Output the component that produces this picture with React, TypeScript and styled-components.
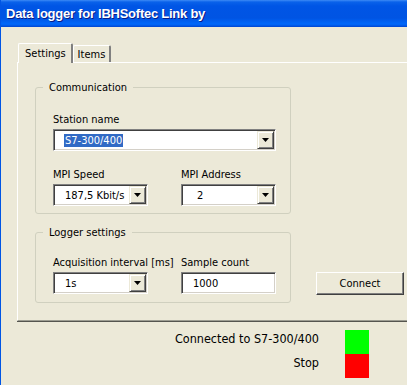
import React from "react";
import styled, { createGlobalStyle } from "styled-components";

const GlobalStyle = createGlobalStyle`
  html, body {
    margin: 0;
    padding: 0;
    background: #ece9d8;
  }
`;

const Window = styled.div`
  width: 407px;
  height: 385px;
  box-sizing: border-box;
  background: #ece9d8;
  border-left: 1px solid #0055e5;
  display: flex;
  flex-direction: column;
  overflow: hidden;
  font-family: "DejaVu Sans Condensed", "DejaVu Sans", sans-serif;
  font-size: 11px;
  color: #000;
`;

const TitleBar = styled.div`
  height: 27px;
  flex: none;
  display: flex;
  align-items: center;
  padding-left: 5px;
  background: linear-gradient(
    to bottom,
    #3d8bf5 0px,
    #0a62ea 2px,
    #0055e5 6px,
    #0054e3 18px,
    #0068fa 24px,
    #0060f0 25px,
    #0045d0 27px
  );
  color: #fff;
  font-family: "Liberation Sans", Arial, sans-serif;
  font-weight: bold;
  font-size: 13px;
  letter-spacing: -0.25px;
  text-shadow: 1px 1px 0 #0a1c86;
`;

const Body = styled.div`
  padding: 16px 0 0 16px;
`;

const TabStrip = styled.div`
  display: flex;
  align-items: flex-end;
  height: 19px;
  padding-left: 1px;
`;

const Tab = styled.div<{ $active?: boolean }>`
  box-sizing: border-box;
  height: ${(p) => (p.$active ? "20px" : "17px")};
  margin-bottom: ${(p) => (p.$active ? "-1px" : "0")};
  padding: ${(p) => (p.$active ? "3px 5px 0 6px" : "2px 4px 0 4px")};
  background: #ece9d8;
  border-top: 1px solid #fff;
  border-left: 1px solid #fff;
  border-right: 2px solid #808080;
  border-radius: 2px 2px 0 0;
  position: relative;
  z-index: ${(p) => (p.$active ? 1 : 0)};
`;

const Panel = styled.div`
  border-top: 1px solid #fff;
  border-left: 1px solid #fff;
  border-bottom: 1px solid #9d9d92;
  box-shadow: 0 1px 0 #55554f;
  padding: 18px 0 17px 17px;
  display: flex;
  align-items: flex-end;
  gap: 25px;
`;

const Groups = styled.div`
  width: 256px;
  display: flex;
  flex-direction: column;
  gap: 12px;
`;

const Group = styled.fieldset<{ $top: number; $bottom: number }>`
  margin: 0;
  padding: ${(p) => `${p.$top}px 13px ${p.$bottom}px 17px`};
  border: 1px solid #d0d0bf;
  border-radius: 3px;
  display: grid;
  grid-template-columns: 95px 95px;
  column-gap: 33px;
  row-gap: 17px;
`;

const Legend = styled.legend`
  margin-left: -10px;
  padding: 0 6px;
  line-height: 13px;
`;

const Field = styled.div<{ $wide?: boolean }>`
  display: flex;
  flex-direction: column;
  gap: 3px;
  grid-column: ${(p) => (p.$wide ? "1 / span 2" : "auto")};
`;

const Label = styled.span`
  line-height: 13px;
  white-space: nowrap;
`;

const Sunken = styled.div`
  box-sizing: border-box;
  height: 22px;
  display: flex;
  align-items: stretch;
  background: #fff;
  border-top: 1px solid #808080;
  border-left: 1px solid #808080;
  border-bottom: 1px solid #fff;
  border-right: 1px solid #fff;
  box-shadow: inset 1px 1px 0 #404040, inset -1px -1px 0 #d4d0c8;
`;

const Value = styled.div<{ $indent?: number }>`
  flex: 1;
  min-width: 0;
  display: flex;
  align-items: center;
  padding-left: ${(p) => p.$indent ?? 11}px;
  white-space: nowrap;
  overflow: hidden;
`;

const Selected = styled.span`
  background: #316ac5;
  color: #fff;
  padding: 0 1px;
  margin-left: -1px;
  line-height: 13px;
`;

const ArrowButton = styled.div`
  box-sizing: border-box;
  flex: none;
  width: 17px;
  margin: 1px 1px 1px 0;
  display: flex;
  align-items: center;
  justify-content: center;
  background: #ece9d8;
  border-top: 1px solid #ece9d8;
  border-left: 1px solid #ece9d8;
  border-right: 1px solid #404040;
  border-bottom: 1px solid #404040;
  box-shadow: inset 1px 1px 0 #fff, inset -1px -1px 0 #808080;
`;

const Arrow = () => (
  <svg width="7" height="4" viewBox="0 0 7 4">
    <path d="M0 0h7L3.5 4z" fill="#000" />
  </svg>
);

const Combo: React.FC<{ children: React.ReactNode; indent?: number }> = ({
  children,
  indent,
}) => (
  <Sunken>
    <Value $indent={indent}>{children}</Value>
    <ArrowButton>
      <Arrow />
    </ArrowButton>
  </Sunken>
);

const Button = styled.button`
  box-sizing: border-box;
  width: 88px;
  height: 23px;
  margin-bottom: 8px;
  padding: 0;
  font: inherit;
  color: #000;
  background: #ece9d8;
  border-top: 1px solid #fff;
  border-left: 1px solid #fff;
  border-right: 1px solid #404040;
  border-bottom: 1px solid #404040;
  box-shadow: inset -1px -1px 0 #808080;
`;

const Status = styled.div`
  padding: 9px 38px 0 0;
  display: flex;
  flex-direction: column;
  font-size: 12.5px;
`;

const StatusRow = styled.div`
  display: flex;
  justify-content: flex-end;
  align-items: flex-start;
  gap: 26px;
`;

const StatusText = styled.span`
  line-height: 15px;
  padding-top: 1px;
`;

const Lamp = styled.div<{ $color: string }>`
  width: 24px;
  height: 24px;
  background: ${(p) => p.$color};
`;

export default function App() {
  return (
    <>
      <GlobalStyle />
      <Window>
        <TitleBar>Data logger for IBHSoftec Link by</TitleBar>
        <Body>
          <TabStrip>
            <Tab $active>Settings</Tab>
            <Tab>Items</Tab>
          </TabStrip>
          <Panel>
            <Groups>
              <Group $top={19} $bottom={7}>
                <Legend>Communication</Legend>
                <Field $wide>
                  <Label>Station name</Label>
                  <Combo>
                    <Selected>S7-300/400</Selected>
                  </Combo>
                </Field>
                <Field>
                  <Label>MPI Speed</Label>
                  <Combo>187,5 Kbit/s</Combo>
                </Field>
                <Field>
                  <Label>MPI Address</Label>
                  <Combo indent={15}>2</Combo>
                </Field>
              </Group>
              <Group $top={17} $bottom={8}>
                <Legend>Logger settings</Legend>
                <Field>
                  <Label>Acquisition interval [ms]</Label>
                  <Combo>1s</Combo>
                </Field>
                <Field>
                  <Label>Sample count</Label>
                  <Sunken>
                    <Value>1000</Value>
                  </Sunken>
                </Field>
              </Group>
            </Groups>
            <Button>Connect</Button>
          </Panel>
          <Status>
            <StatusRow>
              <StatusText>Connected to S7-300/400</StatusText>
              <Lamp $color="#00ff00" />
            </StatusRow>
            <StatusRow>
              <StatusText>Stop</StatusText>
              <Lamp $color="#ff0000" />
            </StatusRow>
          </Status>
        </Body>
      </Window>
    </>
  );
}
